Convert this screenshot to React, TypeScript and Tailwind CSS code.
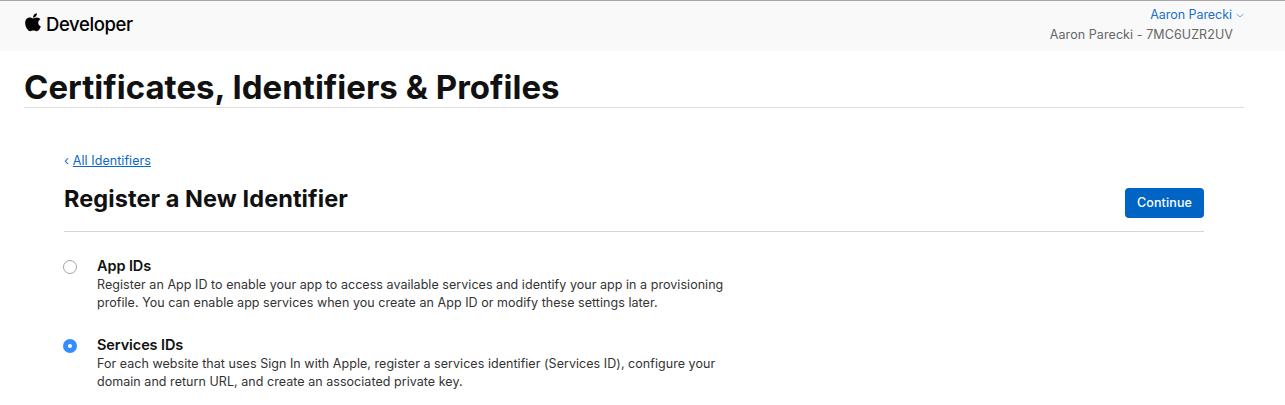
import { FaApple } from "react-icons/fa";

function Option({ title, lines, checked, className }: { title: string; lines: string[]; checked?: boolean; className: string }) {
  return (
    <label className={"flex " + className}>
      <span
        className={
          checked
            ? "mt-[3px] flex size-[14px] shrink-0 items-center justify-center rounded-full bg-[#338eff]"
            : "mt-[3px] size-[14px] shrink-0 rounded-full border border-[#a3a3a3] bg-white"
        }
      >
        {checked && <span className="size-1 rounded-full bg-white" />}
      </span>
      <div className="ml-5">
        <div className="mb-px text-[14.5px] leading-[18px] font-semibold tracking-[-0.1px] text-[#111]">{title}</div>
        {lines.map((l) => (
          <p key={l} className="text-[12.5px] leading-[18px] tracking-[0.045px] whitespace-nowrap text-[#333]">
            {l}
          </p>
        ))}
      </div>
    </label>
  );
}

export default function App() {
  return (
    <div className="h-[405px] overflow-hidden bg-white font-['Inter',sans-serif] text-[#111]">
      <header className="flex h-[51px] justify-between border-t border-[#a8a8a8] bg-[#f9f9f9]">
        <div className="flex h-[48px] items-center pl-[25px] text-black">
          <FaApple className="mb-[6px] h-[20.5px] w-4 shrink-0" preserveAspectRatio="none" />
          <span className="ml-[5px] text-[18.5px] font-medium tracking-[-0.38px]">Developer</span>
        </div>
        <div className="pt-1 text-[12.5px] leading-5">
          <div className="flex items-center justify-end pr-[41px] text-[#1a70cb]">
            <span className="tracking-[-0.04px]">Aaron Parecki</span>
            <svg viewBox="0 0 8 5" className="mt-px ml-1 h-[5px] w-2" fill="none" stroke="#75abe1">
              <path d="M.7 1.2 4 3.9 7.3 1.2" />
            </svg>
          </div>
          <div className="pr-[52px] tracking-[0.08px] text-[#666]">Aaron Parecki - 7MC6UZR2UV</div>
        </div>
      </header>
      <main className="px-6">
        <div className="mr-[17px] h-[57px] border-b border-[#ddd] pt-[16px]">
          <h1 className="text-[33px] leading-[41px] font-bold tracking-[0.02px]">Certificates, Identifiers &amp; Profiles</h1>
        </div>
        <section className="mr-[57px] ml-10 pt-[43px]">
          <a className="flex h-5 items-center text-[12.5px] text-[#0b68c5]">
            <span className="mr-1">‹</span>
            <span className="tracking-[0.06px] underline underline-offset-1">All Identifiers</span>
          </a>
          <div className="flex h-[61px] justify-between border-b border-[#d6d6d6] pt-[17px]">
            <h2 className="mt-[-4px] text-[23.5px] leading-[30px] font-bold tracking-[0.08px]">Register a New Identifier</h2>
            <button className="h-[30px] w-[79px] rounded-[4px] bg-[#0064c5] text-[12.5px] font-medium tracking-[0.15px] text-white">Continue</button>
          </div>
          <Option className="mt-[25px] -ml-px" title="App IDs" lines={["Register an App ID to enable your app to access available services and identify your app in a provisioning", "profile. You can enable app services when you create an App ID or modify these settings later."]} />
          <Option className="mt-[24px] -ml-px" checked title="Services IDs" lines={["For each website that uses Sign In with Apple, register a services identifier (Services ID), configure your", "domain and return URL, and create an associated private key."]} />
        </section>
      </main>
    </div>
  );
}
